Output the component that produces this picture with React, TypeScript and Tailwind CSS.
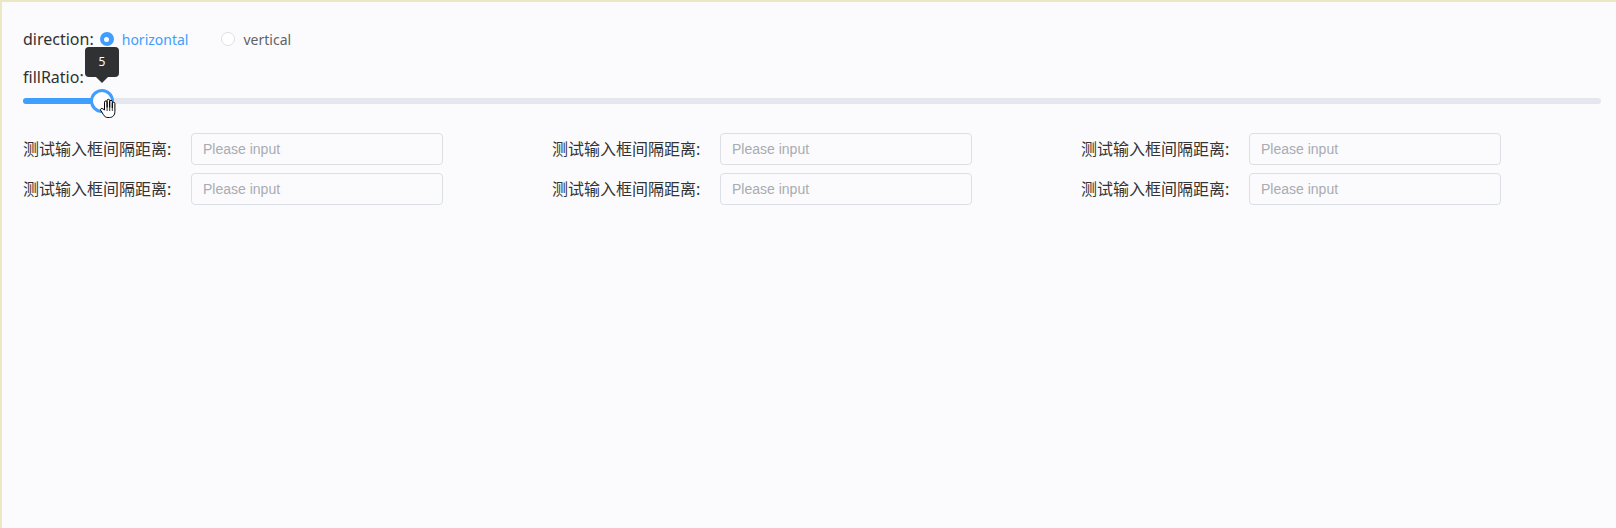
import React from "react";

const cjk = { fontFamily: '"Noto Sans", "Noto Sans CJK SC", sans-serif' };

function Field() {
  return (
    <div className="flex items-center h-[32px]">
      <span className="w-[168px] shrink-0 text-[16px] leading-[20px] text-[#333333]" style={cjk}>
        测试输入框间隔距离:
      </span>
      <div className="w-[252px] h-[32px] rounded-[4px] border border-[#dcdfe6] flex items-center pl-[11px]">
        <input
          placeholder="Please input"
          className="w-full bg-transparent outline-none text-[14px] text-[#606266] placeholder:text-[#a8abb2]"
          style={{ fontFamily: '"Liberation Sans", Arial, sans-serif' }}
        />
      </div>
    </div>
  );
}

function Hand() {
  return (
    <svg width="18" height="21" viewBox="0 0 18 21" className="absolute left-[76px] top-[7px]">
      <path
        d="M5.5 12 V4.2 a1.3 1.3 0 0 1 2.6 0 V9.5 V2.6 a1.3 1.3 0 0 1 2.6 0 V9.5 V3.6 a1.3 1.3 0 0 1 2.6 0 V10 V5.6 a1.3 1.3 0 0 1 2.6 0 V13.5 c0 3.5 -2 6 -5.5 6 h-1.5 c-2.2 0 -3.4 -1 -4.6 -3 l-2.6 -4.2 a1.3 1.3 0 0 1 2.1 -1.5 z"
        fill="#ffffff"
        stroke="#000000"
        strokeWidth="1"
        strokeLinejoin="round"
      />
      <path d="M8.1 9.5 V13 M10.7 9.5 V13 M13.3 10 V13" stroke="#000" strokeWidth="0.8" />
    </svg>
  );
}

export default function App() {
  return (
    <div
      className="w-[1616px] h-[528px] bg-[#fbfbfd] border-t-2 border-l-2 border-[#ebe8c6] pl-[21px] pt-[25px] overflow-hidden"
      style={cjk}
    >
      <div className="flex items-center h-[24px]">
        <span className="text-[16px] text-[#303133]">direction:</span>
        <label className="flex items-center ml-[6px]">
          <span className="w-[14px] h-[14px] rounded-full bg-[#409eff] flex items-center justify-center">
            <span className="w-[5px] h-[5px] rounded-full bg-white" />
          </span>
          <span className="ml-[8px] text-[14px] text-[#409eff]">horizontal</span>
        </label>
        <label className="flex items-center ml-[33px]">
          <span className="w-[14px] h-[14px] rounded-full border border-[#dcdfe6] bg-white" />
          <span className="ml-[8px] text-[14px] text-[#606266]">vertical</span>
        </label>
      </div>
      <div className="flex items-center h-[24px] mt-[14px]">
        <span className="text-[16px] text-[#303133]">fillRatio:</span>
      </div>
      <div className="relative w-[1578px] h-[20px] mt-[2px] flex items-center">
        <div className="w-full h-[6px] rounded-[3px] bg-[#e4e7ed]">
          <div className="h-full w-[79px] rounded-l-[3px] bg-[#409eff]" />
        </div>
        <div className="absolute left-[67px] top-[-2px] w-[24px] h-[24px] rounded-full border-[3px] border-[#409eff] bg-white" />
        <div className="absolute left-[62px] top-[-44px] w-[34px] h-[30px] rounded-[4px] bg-[#303133] flex items-center justify-center text-[12px] text-white">
          5
          <span className="absolute bottom-[-6px] left-[11px] w-0 h-0 border-l-[6px] border-r-[6px] border-t-[6px] border-l-transparent border-r-transparent border-t-[#303133]" />
        </div>
        <Hand />
      </div>
      <div className="mt-[22px] grid grid-cols-[repeat(3,529px)] gap-y-[8px]">
        <Field />
        <Field />
        <Field />
        <Field />
        <Field />
        <Field />
      </div>
    </div>
  );
}
